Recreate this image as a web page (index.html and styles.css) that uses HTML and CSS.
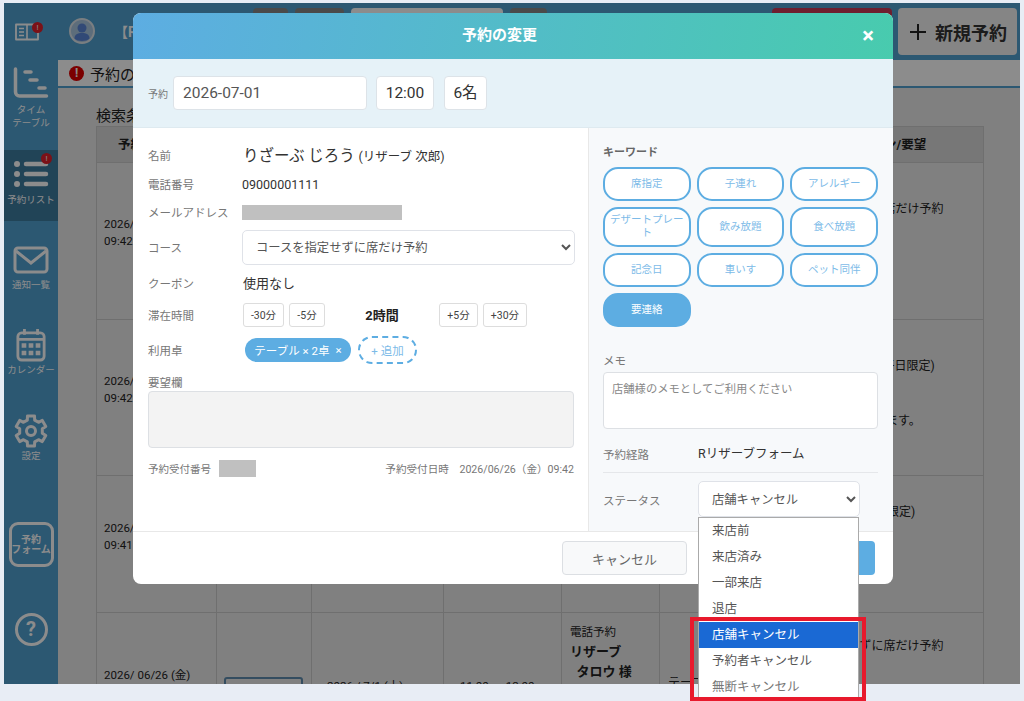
FILE: index.html
```html
<!DOCTYPE html>
<html lang="ja">
<head>
  <meta charset="utf-8">
  <title>予約の変更</title>
  <link rel="stylesheet" href="styles.css">
</head>
<body>
  <div class="frame">
    <!-- Top bar -->
    <div class="topbar">
      <div class="book">
        <svg viewBox="0 0 24 18" width="24" height="18">
          <path d="M1 1.500h22v15H1z" fill="none" stroke="#fff" stroke-width="1.800" stroke-linejoin="round"/>
          <path d="M12 2v14M4 5.500h5M4 9h5M4 12.500h5" fill="none" stroke="#fff" stroke-width="1.600"/>
        </svg>
        <span class="badge book-badge">!</span>
      </div>
      <svg class="avatar" viewBox="0 0 26 26" width="26" height="26">
        <circle cx="13" cy="13" r="12" fill="#a9c6e0" stroke="#dfe6ec" stroke-width="2"/>
        <circle cx="13" cy="10" r="4.500" fill="#5a86d8"/>
        <path d="M5.500 20.500c0-4 3-5.500 7.500-5.500s7.500 1.500 7.500 5.500c-2 1.800-4.500 2.500-7.500 2.500s-5.500-.7-7.500-2.500z" fill="#5a86d8"/>
      </svg>
      <div class="shop-name">【RESERVE】</div>
      <div class="top-btn dark w35"></div>
      <div class="top-btn dark w49"></div>
      <div class="top-btn light w152"></div>
      <div class="top-btn dark w37"></div>
      <div class="top-btn red"></div>
      <div class="new-btn">
        <svg class="plus" viewBox="0 0 16 16" width="16" height="16">
          <path d="M8 0v16M0 8h16" stroke="#222" stroke-width="2"/>
        </svg>
        新規予約
      </div>
    </div>

    <div class="under">
      <!-- Side menu -->
      <nav class="sidebar">
        <div class="side-item h90">
          <svg viewBox="0 0 36 32" width="36" height="32">
            <path d="M2.500 2v23a4 4 0 0 0 4 4h27" fill="none" stroke="#fff" stroke-width="3.500" stroke-linecap="round"/>
            <path d="M12 5h6M17 13h7M26 21h6" fill="none" stroke="#fff" stroke-width="3.500" stroke-linecap="round"/>
          </svg>
          <span class="side-label">タイム<br>テーブル</span>
        </div>
        <div class="side-item active h71">
          <svg viewBox="0 0 36 28" width="36" height="28">
            <circle cx="4" cy="4" r="3" fill="#fff"/><circle cx="4" cy="14" r="3" fill="#fff"/><circle cx="4" cy="24" r="3" fill="#fff"/>
            <path d="M13 4h20M13 14h20M13 24h20" stroke="#fff" stroke-width="4.500" stroke-linecap="round"/>
          </svg>
          <span class="side-label">予約リスト</span>
          <span class="badge list-badge">!</span>
        </div>
        <div class="side-item h89">
          <svg viewBox="0 0 36 28" width="36" height="28">
            <rect x="2" y="2" width="32" height="24" rx="3" fill="none" stroke="#fff" stroke-width="3"/>
            <path d="M3 5l15 12L33 5" fill="none" stroke="#fff" stroke-width="3"/>
          </svg>
          <span class="side-label">通知一覧</span>
        </div>
        <div class="side-item h85">
          <svg viewBox="0 0 32 36" width="30" height="34">
            <rect x="2" y="5" width="28" height="29" rx="4" fill="none" stroke="#fff" stroke-width="3"/>
            <path d="M9 1v6M23 1v6M2 12h28" stroke="#fff" stroke-width="3"/>
            <path d="M6 16h5v5H6zM13.500 16h5v5h-5zM21 16h5v5h-5zM6 24h5v5H6zM13.500 24h5v5h-5zM21 24h5v5h-5z" fill="#fff"/>
          </svg>
          <span class="side-label">カレンダー</span>
        </div>
        <div class="side-item h95">
          <svg viewBox="-18 -18 36 36" width="36" height="36">
            <path d="M-3.700-10.900L-3.500-15.100L3.500-15.100L3.700-10.900L7.500-8.700L11.300-10.600L14.800-4.500L11.300-2.200L11.300 2.200L14.800 4.500L11.300 10.600L7.500 8.700L3.700 10.900L3.500 15.100L-3.500 15.100L-3.700 10.900L-7.500 8.700L-11.300 10.600L-14.800 4.500L-11.300 2.200L-11.300-2.200L-14.800-4.500L-11.300-10.600L-7.500-8.700z" fill="none" stroke="#fff" stroke-width="3" stroke-linejoin="round"/>
            <circle r="4.500" fill="none" stroke="#fff" stroke-width="3"/>
          </svg>
          <span class="side-label">設定</span>
        </div>
        <div class="side-item h100">
          <div class="form-box">予約<br>フォーム</div>
        </div>
        <div class="side-item">
          <div class="help">?</div>
        </div>
      </nav>

      <!-- Main list behind the modal -->
      <main class="main">
        <div class="notice"><span class="notice-mark">!</span>予約の変更</div>
        <div class="list-area">
          <div class="list-title">検索条件</div>
          <table class="list">
            <colgroup>
              <col class="c1"><col class="c2"><col class="c3"><col class="c4"><col class="c5"><col class="c6">
            </colgroup>
            <tr class="head">
              <th>予約日時</th><th></th><th></th><th></th><th></th><th class="last-head">コース/クーポン/要望</th>
            </tr>
            <tr class="row1">
              <td class="date">2026/ 06/26 (金)<br>09:42</td><td></td><td></td><td></td><td></td>
              <td class="note"><div class="note-a">コースを指定せずに席だけ予約</div></td>
            </tr>
            <tr class="row2">
              <td class="date">2026/ 06/26 (金)<br>09:42</td><td></td><td></td><td></td><td></td>
              <td class="note"><div class="note-b">ランチコース (平日限定)</div><div class="note-c">よろしくお願いします。</div></td>
            </tr>
            <tr class="row3">
              <td class="date">2026/ 06/26 (金)<br>09:41</td><td></td><td></td><td></td><td></td>
              <td class="note"><div class="note-d">ランチ (平日限定)</div></td>
            </tr>
            <tr class="row4">
              <td class="date">2026/ 06/26 (金)</td>
              <td><div class="state-btn"></div></td>
              <td class="day">2026 / 7/1 (土)</td>
              <td class="time">11:00 ～ 12:00</td>
              <td class="guest">電話予約<br><b>リザーブ<br>&nbsp;&nbsp;タロウ 様</b></td>
              <td class="note"><div class="note-e">コースを指定せずに席だけ予約</div><div class="table-name">テーブル</div></td>
            </tr>
          </table>
        </div>
      </main>
    </div>
    <div class="backdrop"></div>
  </div>

  <!-- Modal -->
  <div class="modal">
    <div class="modal-head">
      <div class="modal-title">予約の変更</div>
      <div class="modal-close">×</div>
    </div>

    <div class="date-band">
      <span class="date-label">予約</span>
      <div class="box date-box">2026-07-01</div>
      <div class="box time-box">12:00</div>
      <div class="box num-box">6名</div>
    </div>

    <div class="modal-body">
      <div class="col-left">
        <div class="field h28"><span class="label">名前</span><span class="name">りざーぶ じろう <small>(リザーブ 次郎)</small></span></div>
        <div class="field h29"><span class="label">電話番号</span><span class="value tel">09000001111</span></div>
        <div class="field h28"><span class="label">メールアドレス</span><span class="mask mail-mask"></span></div>
        <div class="field h42"><span class="label">コース</span>
          <select class="select course"><option>コースを指定せずに席だけ予約</option></select>
        </div>
        <div class="field h30"><span class="label">クーポン</span><span class="value big">使用なし</span></div>
        <div class="field h33"><span class="label">滞在時間</span>
          <span class="step w41">-30分</span><span class="step w36">-5分</span>
          <span class="stay">2時間</span>
          <span class="step w39">+5分</span><span class="step w44">+30分</span>
        </div>
        <div class="field h38"><span class="label">利用卓</span>
          <span class="chip">テーブル × 2卓<i>×</i></span><span class="add-chip">+ 追加</span>
        </div>
        <div class="request-label">要望欄</div>
        <div class="area gray"></div>
        <div class="meta">
          <span>予約受付番号</span><span class="mask no-mask"></span>
          <span class="meta-date">予約受付日時　2026/06/26（金）09:42</span>
        </div>
      </div>

      <div class="col-right">
        <div class="kw-title">キーワード</div>
        <div class="kw-grid">
          <div class="kw">席指定</div><div class="kw">子連れ</div><div class="kw">アレルギー</div>
          <div class="kw">デザートプレート</div><div class="kw">飲み放題</div><div class="kw">食べ放題</div>
          <div class="kw">記念日</div><div class="kw">車いす</div><div class="kw">ペット同伴</div>
          <div class="kw on">要連絡</div>
        </div>
        <div class="memo-label">メモ</div>
        <div class="area memo">店舗様のメモとしてご利用ください</div>
        <div class="route"><span class="label">予約経路</span><span class="route-value">Rリザーブフォーム</span></div>
        <div class="status"><span class="label status-label">ステータス</span>
          <div class="status-field">
            <select class="select status-select"><option>店舗キャンセル</option></select>
            <ul class="status-list">
              <li>来店前</li>
              <li>来店済み</li>
              <li>一部来店</li>
              <li>退店</li>
              <li class="picked">店舗キャンセル</li>
              <li>予約者キャンセル</li>
              <li class="dim">無断キャンセル</li>
            </ul>
            <div class="red-mark"></div>
          </div>
        </div>
      </div>
    </div>

    <div class="modal-foot">
      <button class="btn-cancel">キャンセル</button>
      <button class="btn-save">変更する</button>
    </div>
  </div>
</body>
</html>
```

FILE: styles.css
```css
* {
  box-sizing: border-box;
}

html, body {
  height: 701px;
  overflow: hidden;
}

body {
  margin: 0;
  padding: 3px 4px 0;
  background-color: #e8edf5;
  font-family: Roboto, "Noto Sans CJK JP", sans-serif;
  color: #333;
  position: relative;
}

/* Page behind the modal */
.frame {
  position: relative;
  width: 1016px;
  height: 681px;
  overflow: hidden;
  background-color: #50a0d0;
}

.backdrop {
  position: absolute;
  inset: 0;
  background-color: rgba(0, 0, 0, 0.45);
}

.topbar {
  height: 57px;
  display: flex;
  align-items: flex-start;
  padding-left: 11px;
}

.book {
  position: relative;
  height: 18px;
  margin: 20px 30px 0 0;
}

.book svg {
  display: block;
}

.avatar {
  margin: 15px 27px 0 0;
}

.shop-name {
  width: 139px;
  margin: 18px 0 0 -8px;
  font-size: 14px;
  font-weight: 700;
  color: #fff;
  white-space: nowrap;
  overflow: hidden;
}

.top-btn {
  height: 47px;
  margin: 5px 7px 0 0;
  border-radius: 4px;
}

.top-btn.dark { background-color: #888; }
.top-btn.light { background-color: #fff; }
.top-btn.w35 { width: 35px; }
.top-btn.w49 { width: 49px; }
.top-btn.w152 { width: 152px; }
.top-btn.w37 { width: 37px; }

.top-btn.red {
  width: 120px;
  margin-left: auto;
  margin-right: 6px;
  background-color: #c83a57;
}

.new-btn {
  width: 119px;
  height: 47px;
  margin: 5px 3px 0 0;
  padding-left: 2px;
  background-color: #f2f2f2;
  border-radius: 4px;
  display: flex;
  align-items: center;
  justify-content: center;
  font-size: 18px;
  font-weight: 700;
  color: #333;
  white-space: nowrap;
}

.plus {
  margin-right: 9px;
}

.under {
  display: flex;
  height: 624px;
}

.sidebar {
  width: 54px;
  flex-shrink: 0;
}

.side-item {
  position: relative;
  display: flex;
  flex-direction: column;
  align-items: center;
  padding-top: 7px;
  color: #fff;
}

.side-item svg {
  flex-shrink: 0;
}

.h90 { height: 90px; }
.h71 { height: 71px; padding-top: 10px; }
.h89 { height: 89px; padding-top: 25px; }
.h85 { height: 85px; padding-top: 18px; }
.h95 { height: 95px; padding-top: 18px; }
.h100 { height: 100px; padding-top: 32px; }

.side-item.active {
  background-color: #3d7c9f;
}

.side-label {
  margin-top: 5px;
  font-size: 9.500px;
  line-height: 13px;
  text-align: center;
  white-space: nowrap;
}

.h90 .side-label { margin-top: 4px; }
.h71 .side-label { margin-top: 5px; }
.h89 .side-label { margin-top: 4px; }
.h85 .side-label { margin-top: 1px; }
.h95 .side-label { margin-top: 0; }

.badge {
  position: absolute;
  width: 11px;
  height: 11px;
  border-radius: 50%;
  background-color: #e01f2a;
  font-size: 8px;
  line-height: 11px;
  text-align: center;
  color: #fff;
}

.list-badge {
  top: 3px;
  right: 6px;
}

.book-badge {
  top: -1px;
  left: 17px;
}

.form-box {
  width: 45px;
  height: 45px;
  border: 3px solid #fff;
  border-radius: 9px;
  display: flex;
  align-items: center;
  justify-content: center;
  text-align: center;
  font-size: 10px;
  line-height: 10px;
  font-weight: 700;
  white-space: nowrap;
}

.help {
  width: 33px;
  height: 33px;
  margin-top: 16px;
  border: 3px solid #fff;
  border-radius: 50%;
  text-align: center;
  font-size: 20px;
  line-height: 27px;
  font-weight: 700;
}

.main {
  flex: 1;
  background-color: #e9e9e9;
  min-width: 0;
}

.notice {
  height: 28px;
  background-color: #fff;
  border-bottom: 2px solid #50a0d0;
  display: flex;
  align-items: center;
  padding-left: 11px;
  font-size: 15px;
  color: #222;
}

.notice-mark {
  width: 15px;
  height: 15px;
  margin-right: 6px;
  border-radius: 50%;
  background-color: #e00000;
  color: #fff;
  font-size: 12px;
  line-height: 15px;
  font-weight: 700;
  text-align: center;
}

.list-area {
  padding: 18px 37px 0 38px;
}

.list-title {
  height: 20px;
  font-size: 15px;
  line-height: 20px;
  color: #222;
}

.list {
  table-layout: fixed;
  width: 887px;
  border-collapse: collapse;
  font-size: 11.500px;
  line-height: 17px;
  color: #222;
}

.c1 { width: 120px; }
.c2 { width: 95px; }
.c3 { width: 132px; }
.c4 { width: 118px; }
.c5 { width: 98px; }
.c6 { width: 324px; }

.list th, .list td {
  border: 1px solid #cbcbcb;
  padding: 0;
  vertical-align: top;
  text-align: left;
}

.head {
  height: 36px;
}

.list th {
  background-color: #d9d9d9;
  font-size: 12.500px;
  font-weight: 700;
  vertical-align: middle;
  padding-left: 21px;
  white-space: nowrap;
}

.list th.last-head {
  padding-left: 145px;
}

.row1 { height: 157px; }
.row2 { height: 156px; }
.row3 { height: 137px; }
.row4 { height: 120px; }

.list td.date {
  padding: 53px 0 0 7px;
  white-space: nowrap;
}

.row3 td.date { padding-top: 44px; }
.row4 td.date { padding-top: 54px; }

.note {
  font-size: 12px;
  white-space: nowrap;
}

.note-a, .note-e {
  padding-left: 116px;
  margin-top: 37px;
}

.note-a { margin-top: 38px; }
.note-e { margin-top: 25px; }

.note-b {
  padding-left: 144px;
  margin-top: 38px;
}

.note-c {
  padding-left: 130px;
  margin-top: 38px;
}

.note-d {
  padding-left: 160px;
  margin-top: 28px;
}

.table-name {
  padding-left: 8px;
  margin-top: 20px;
}

.state-btn {
  width: 79px;
  height: 40px;
  margin: 64px 0 0 7px;
  border: 2px solid #5f8db0;
  border-radius: 3px;
}

.list td.day {
  padding: 65px 0 0 15px;
}

.list td.time {
  padding: 65px 0 0 16px;
}

.list td.guest {
  padding: 10px 0 0 8px;
  line-height: 19px;
  white-space: nowrap;
}

.guest b {
  font-size: 13px;
  line-height: 19px;
}

/* Modal */
.modal {
  position: absolute;
  left: 133px;
  top: 13px;
  width: 760px;
  height: 571px;
  background-color: #fff;
  border-radius: 8px;
  display: flex;
  flex-direction: column;
}

.modal-head {
  height: 46px;
  flex-shrink: 0;
  display: flex;
  align-items: center;
  padding: 0 19px 3px 4px;
  border-radius: 8px 8px 0 0;
  background: linear-gradient(100deg, #5dade2, #48cbae);
  color: #fff;
}

.modal-title {
  flex: 1;
  text-align: center;
  font-size: 15px;
  line-height: 20px;
  font-weight: 700;
}

.modal-close {
  width: 12px;
  margin-top: 3px;
  font-size: 22px;
  line-height: 22px;
  font-weight: 700;
  text-align: center;
}

.date-band {
  height: 69px;
  flex-shrink: 0;
  display: flex;
  align-items: center;
  padding-left: 15px;
  background-color: #e6f2f8;
  border-bottom: 1px solid #deeaf0;
}

.date-label {
  width: 25px;
  font-size: 10px;
  color: #777;
}

.box {
  height: 34px;
  display: flex;
  align-items: center;
  background-color: #fff;
  border: 1px solid #dde3e8;
  border-radius: 4px;
  font-size: 15.500px;
  line-height: 20px;
  color: #333;
}

.date-box {
  width: 194px;
  margin-right: 9px;
  padding-left: 9px;
  color: #555;
}

.time-box {
  width: 58px;
  margin-right: 10px;
  justify-content: center;
}

.num-box {
  width: 43px;
  justify-content: center;
}

.modal-body {
  height: 403px;
  flex-shrink: 0;
  display: flex;
}

.col-left {
  width: 455px;
  padding: 13px 14px 0 15px;
}

.field {
  display: flex;
  align-items: center;
}

.field.h28 { height: 28px; }
.field.h29 { height: 29px; }
.field.h42 { height: 42px; }
.field.h30 { height: 30px; }
.field.h33 { height: 33px; }
.field.h38 { height: 38px; }

.label {
  width: 95px;
  flex-shrink: 0;
  padding-top: 2px;
  font-size: 11.500px;
  line-height: 16px;
  color: #777;
  white-space: nowrap;
}

.status-label {
  padding-top: 4px;
}

.name {
  padding-top: 2px;
  font-size: 15.500px;
  line-height: 20px;
  color: #333;
}

.name small {
  font-size: 12.500px;
}

.value {
  font-size: 12.500px;
  line-height: 16px;
  color: #333;
}

.value.tel {
  margin: 3px 0 0 -1px;
}

.value.big {
  font-size: 13px;
  margin-top: 1px;
}

.mask {
  display: inline-block;
  background-color: #c0c0c0;
}

.mail-mask {
  width: 160px;
  height: 15px;
  margin-left: -1px;
}

.select {
  height: 35px;
  padding: 2px 0 0 9px;
  background-color: #fff;
  border: 1px solid #dfe2e8;
  border-radius: 5px;
  font-family: inherit;
  font-size: 12.300px;
  color: #555;
}

.course {
  width: 333px;
  flex-shrink: 0;
  margin-left: -1px;
}

.step {
  height: 24px;
  margin-right: 5px;
  display: flex;
  align-items: center;
  justify-content: center;
  background-color: #fff;
  border: 1px solid #ddd;
  border-radius: 3px;
  font-size: 10.500px;
  color: #444;
}

.w41 { width: 41px; }
.w36 { width: 36px; margin-right: 0; }
.w39 { width: 39px; }
.w44 { width: 44px; }

.stay {
  width: 114px;
  text-align: center;
  font-size: 13px;
  font-weight: 700;
  color: #222;
}

.chip {
  width: 106px;
  height: 24px;
  margin-left: 2px;
  display: flex;
  align-items: center;
  justify-content: center;
  background-color: #5dade2;
  border-radius: 12px;
  font-size: 11.500px;
  color: #fff;
  white-space: nowrap;
}

.chip i {
  margin-left: 6px;
  font-style: normal;
}

.add-chip {
  width: 59px;
  height: 28px;
  margin-left: 7px;
  display: flex;
  align-items: center;
  justify-content: center;
  border: 2px dashed #5dade2;
  border-radius: 14px;
  font-size: 11.500px;
  color: #7dbbe8;
  white-space: nowrap;
}

.request-label {
  margin-top: 6px;
  height: 16px;
  font-size: 11.500px;
  line-height: 16px;
  color: #777;
}

.area {
  height: 57px;
  border: 1px solid #dde0e4;
  border-radius: 4px;
  background-color: #fff;
}

.area.gray {
  background-color: #f3f3f3;
}

.meta {
  margin-top: 12px;
  display: flex;
  align-items: center;
  font-size: 10.500px;
  color: #777;
}

.no-mask {
  width: 37px;
  height: 17px;
  margin-left: 8px;
}

.meta-date {
  margin-left: auto;
  font-size: 10.600px;
}

.col-right {
  width: 305px;
  padding: 16px 15px 0 14px;
  background-color: #f7f9fb;
  border-left: 1px solid #e8e8e8;
}

.kw-title {
  height: 14px;
  font-size: 11px;
  line-height: 18px;
  font-weight: 700;
  color: #666;
}

.kw-grid {
  margin-top: 9px;
  display: grid;
  grid-template-columns: repeat(3, 1fr);
  grid-template-rows: 34px 40px 34px 34px;
  gap: 6px;
}

.kw {
  display: flex;
  align-items: center;
  justify-content: center;
  text-align: center;
  padding: 0 4px 2px;
  border: 2px solid #5dade2;
  border-radius: 15px;
  background-color: #fff;
  font-size: 10.500px;
  line-height: 13px;
  color: #7dbbe8;
}

.kw.on {
  background-color: #5dade2;
  color: #fff;
}

.memo-label {
  margin-top: 26px;
  height: 16px;
  font-size: 11.500px;
  line-height: 16px;
  color: #777;
}

.memo {
  margin-top: 3px;
  padding: 9px 8px;
  font-size: 11.300px;
  line-height: 16px;
  color: #888;
}

.route {
  margin-top: 15px;
  height: 29px;
  padding-bottom: 9px;
  display: flex;
  align-items: center;
  border-bottom: 1px solid #e5e7ea;
}

.route-value {
  font-size: 12.500px;
  line-height: 16px;
  color: #333;
}

.status {
  margin-top: 8px;
  display: flex;
  align-items: center;
}

.status-field {
  position: relative;
  height: 36px;
}

.status-select {
  width: 162px;
  height: 36px;
}

.status-list {
  position: absolute;
  left: 0;
  top: 36px;
  z-index: 5;
  width: 161px;
  height: 180px;
  margin: 0;
  padding: 0;
  list-style: none;
  overflow: hidden;
  background-color: #fff;
  border: 1px solid #aaa;
  border-bottom: 0;
}

.status-list li {
  height: 26px;
  padding-left: 13px;
  font-size: 12.500px;
  line-height: 26px;
  color: #555;
}

.status-list .picked {
  background-color: #1a69d4;
  color: #fff;
}

.status-list .dim {
  color: #777;
}

.red-mark {
  position: absolute;
  left: -8px;
  top: 136px;
  z-index: 6;
  width: 176px;
  height: 84px;
  border: 4px solid #e8192c;
}

.modal-foot {
  flex: 1;
  display: flex;
  align-items: center;
  justify-content: flex-end;
  gap: 23px;
  padding-right: 18px;
  border-top: 1px solid #e8e8e8;
}

.modal-foot button {
  height: 34px;
  border-radius: 4px;
  font-family: inherit;
  font-size: 13px;
}

.btn-cancel {
  width: 125px;
  background-color: #f8f9fa;
  border: 1px solid #dcdfe3;
  color: #666;
}

.btn-save {
  width: 165px;
  background-color: #5dade2;
  border: 0;
  color: #fff;
}
```
